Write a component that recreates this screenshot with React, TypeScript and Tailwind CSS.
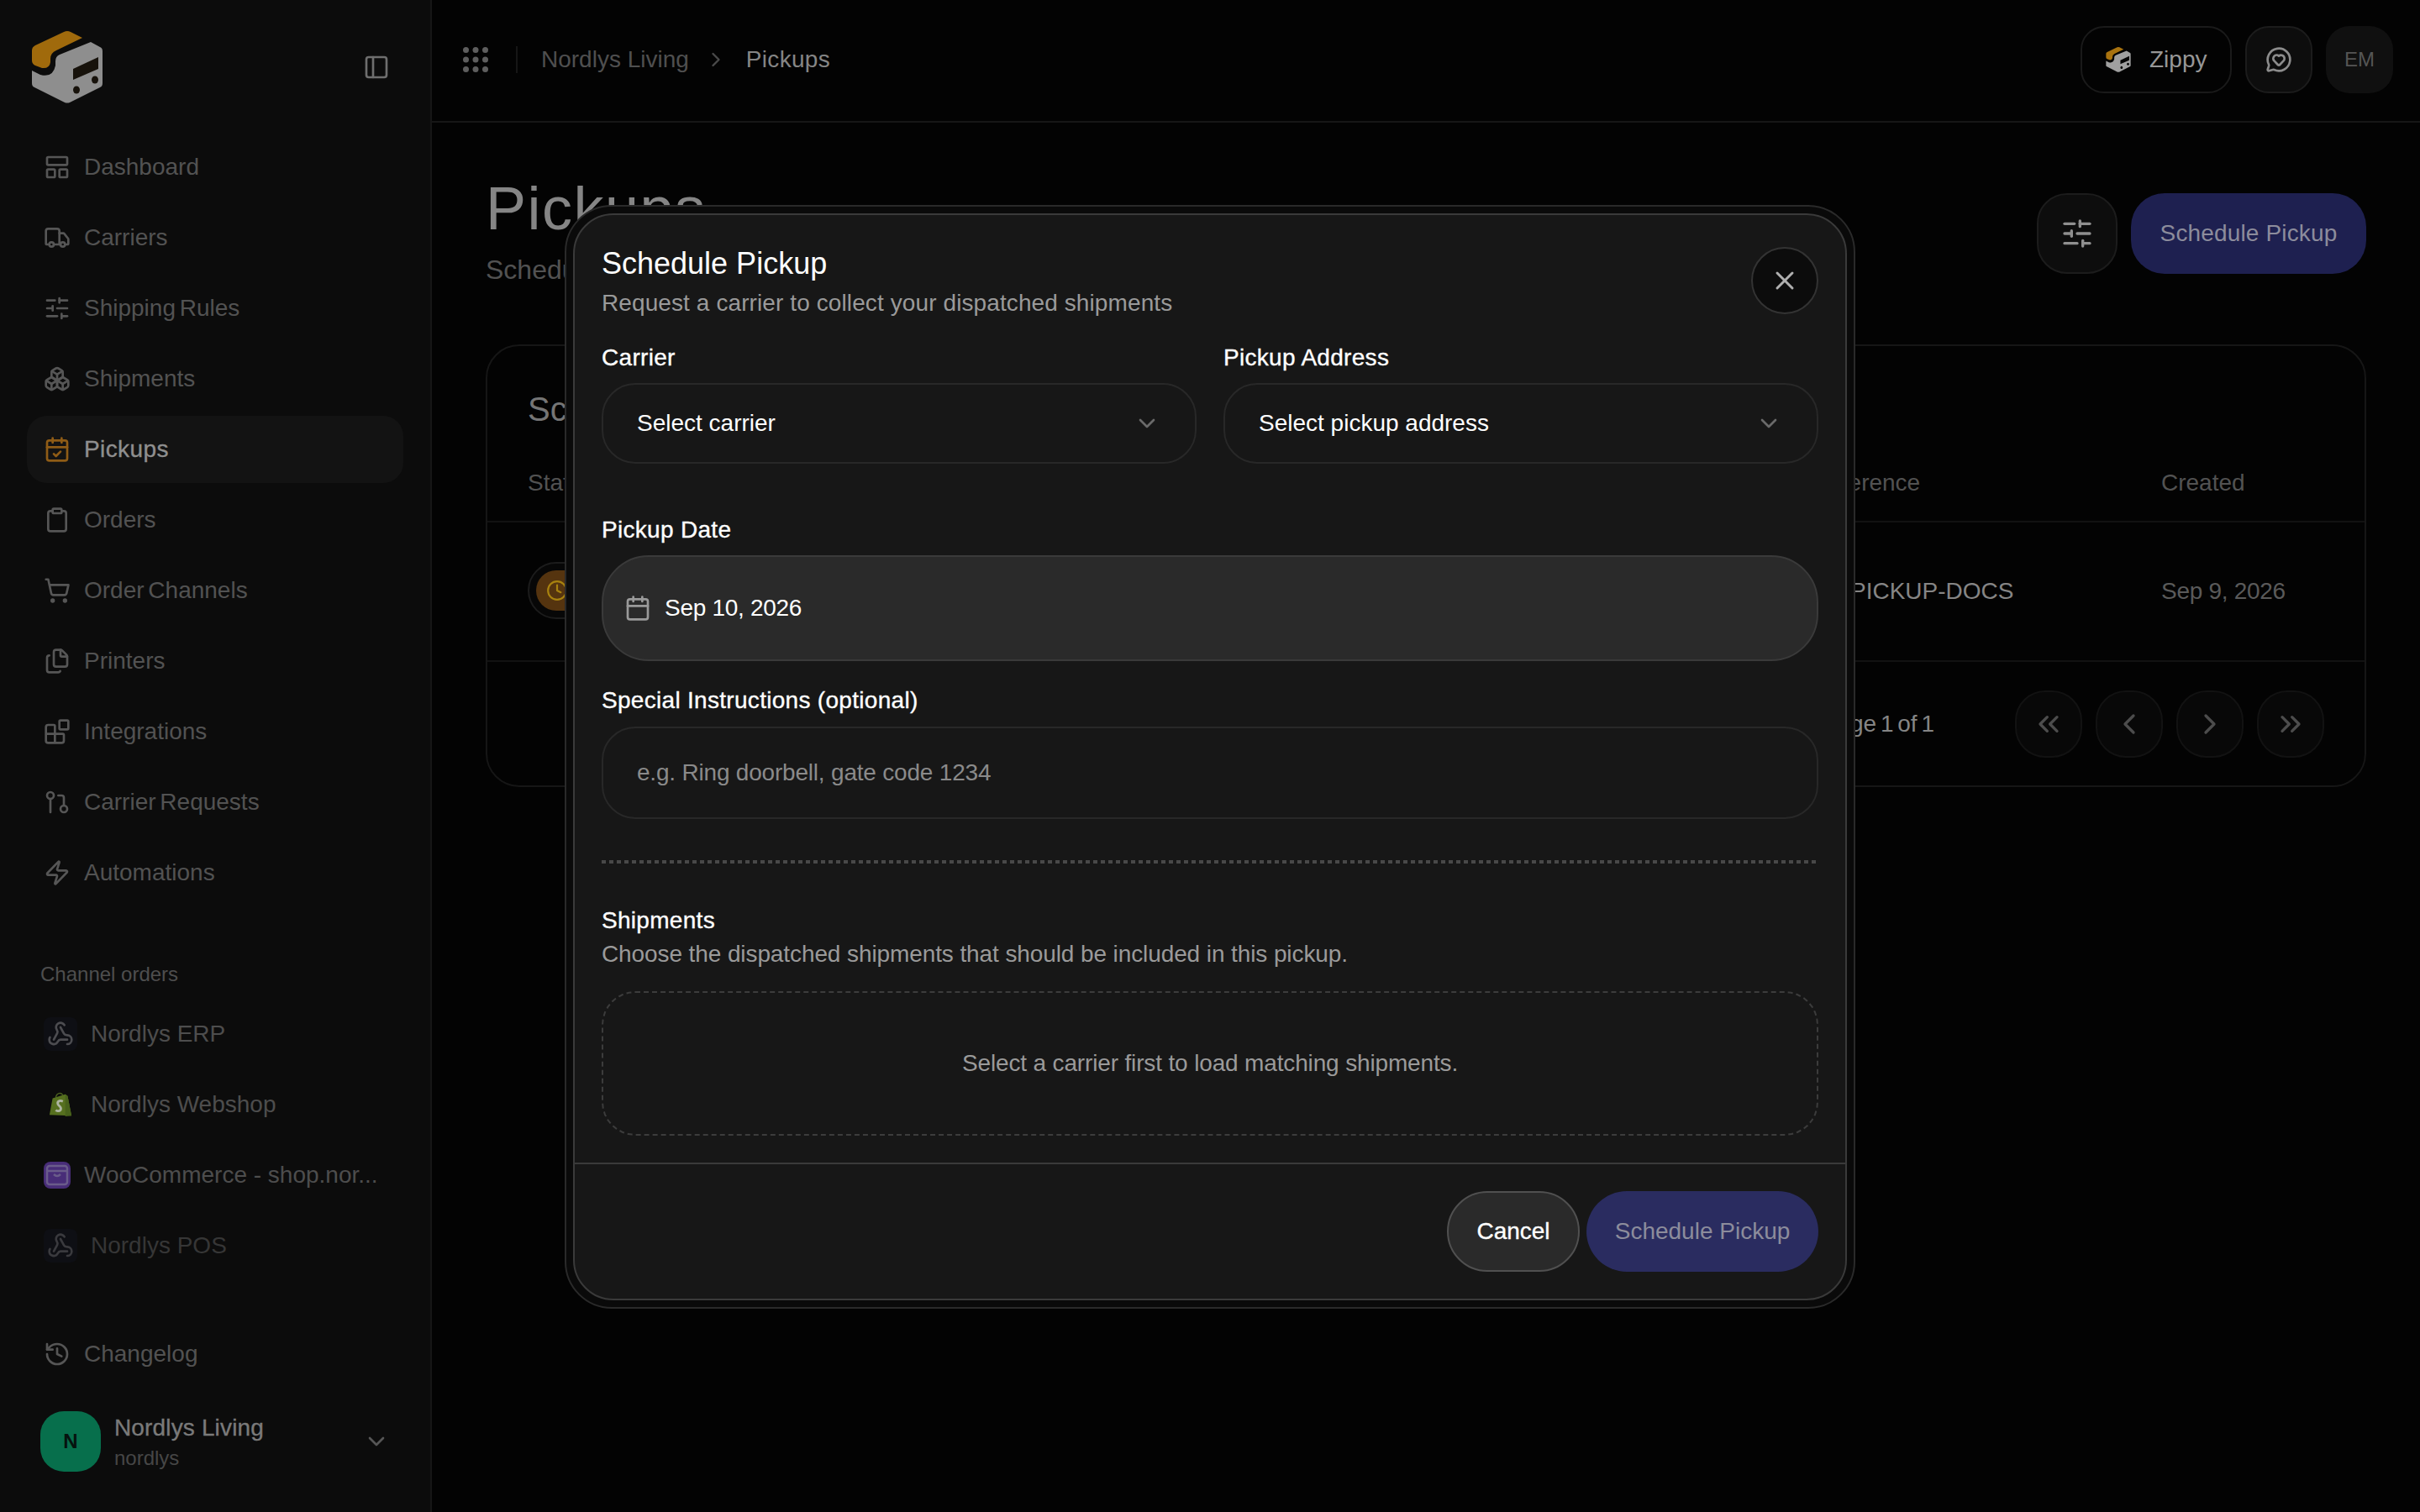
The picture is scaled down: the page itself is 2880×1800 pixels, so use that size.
import React from 'react';
import {
  Blocks,
  Boxes,
  CalendarCheck,
  Calendar,
  ChevronDown,
  ChevronLeft,
  ChevronRight,
  ChevronsLeft,
  ChevronsRight,
  Clipboard,
  Clock,
  Files,
  GitPullRequest,
  History,
  LayoutPanelTop,
  MessageCircleHeart,
  PanelLeft,
  ShoppingCart,
  SlidersHorizontal,
  Truck,
  Webhook,
  X,
  Zap,
} from 'lucide-react';

const navItems = [
  { label: 'Dashboard', icon: LayoutPanelTop },
  { label: 'Carriers', icon: Truck },
  { label: 'Shipping Rules', icon: SlidersHorizontal },
  { label: 'Shipments', icon: Boxes },
  { label: 'Pickups', icon: CalendarCheck, active: true },
  { label: 'Orders', icon: Clipboard },
  { label: 'Order Channels', icon: ShoppingCart },
  { label: 'Printers', icon: Files },
  { label: 'Integrations', icon: Blocks },
  { label: 'Carrier Requests', icon: GitPullRequest },
  { label: 'Automations', icon: Zap },
];

const Logo = ({ className, top, body, cut }: { className: string; top: string; body: string; cut: string }) => (
  <svg viewBox="38 37 84 86" className={className}>
    <path
      className={top}
      d="M38 60Q38 56 42 54L76 38Q80 36 84 38L98 45L67 60Q60 63 60 70L60 74Q59 82 50 81L42 78Q38 76 38 72Z"
    />
    <path
      className={body}
      d="M108 50L119 56Q122 57 122 61L122 99Q122 103 119 104L83 122Q80 123 77 122L41 104Q38 103 38 99L38 84L48 89Q63 93 66 78L66 73Q66 67 71 65Z"
    />
    <path className={cut} d="M87 82L117 68L117 82L87 95Z" />
    <ellipse className={cut} cx="91" cy="107" rx="4" ry="4.5" />
    <ellipse className={cut} cx="113" cy="95" rx="4" ry="4.5" />
  </svg>
);

const NavRow = ({ label, icon: Icon, active }: { label: string; icon: React.ElementType; active?: boolean }) => (
  <div className={`flex h-20 items-center gap-4 rounded-3xl px-5 ${active ? 'bg-[#131313]' : ''}`}>
    <Icon size={32} className={active ? 'text-[#8f5c16]' : 'text-[#565656]'} />
    <span className={active ? 'tracking-[0.4px] text-[#8f8f8f] [-webkit-text-stroke:0.35px]' : 'text-[#525252]'}>
      {label}
    </span>
  </div>
);

const ChannelIconBox = ({ children }: { children: React.ReactNode }) => (
  <div className="flex h-10 w-10 items-center justify-center rounded-lg bg-[#0e0f14]">{children}</div>
);

const Sidebar = () => (
  <aside className="flex h-full w-[514px] shrink-0 flex-col border-r-2 border-[#161616] bg-[#0c0c0c] px-8 pb-12">
    <div className="flex h-[159px] shrink-0 items-center justify-between pl-[6px] pr-[16px]">
      <Logo className="h-[86px] w-[84px]" top="fill-[#a06a0c]" body="fill-[#8e8e8e]" cut="fill-[#17120b]" />
      <PanelLeft size={32} className="text-[#6e6e6e]" />
    </div>

    <nav className="flex flex-col gap-1 text-[28px] [word-spacing:-3px]">
      {navItems.map((item) => (
        <NavRow key={item.label} {...item} />
      ))}
    </nav>

    <div className="mt-[65px] px-4 text-2xl leading-8 text-[#4e4e4e]">Channel orders</div>
    <div className="mt-[15px] flex flex-col gap-1 text-[28px] text-[#4d4d4d]">
      <div className="flex h-20 items-center gap-4 px-5">
        <ChannelIconBox>
          <Webhook size={32} className="text-[#4c4c50]" />
        </ChannelIconBox>
        Nordlys ERP
      </div>
      <div className="flex h-20 items-center gap-4 px-5">
        <div className="flex h-10 w-10 items-center justify-center">
          <svg viewBox="0 0 32 34" className="h-[32px] w-[30px]">
            <path d="M10 8C11 2 17 1 19 5" fill="none" stroke="#4d6322" strokeWidth="1.5" />
            <path d="M6 9L22 4L25 6L30 31L2 30Z" fill="#56701f" />
            <path d="M22 4L25 6L30 31L22 32Z" fill="#48621b" />
            <path d="M19 13C15 11 11 13 13 17C15 20 18 20 16 24C14 26 11 25 10 24" fill="none" stroke="#aeb5a2" strokeWidth="3" />
          </svg>
        </div>
        Nordlys Webshop
      </div>
      <div className="flex h-20 items-center gap-4 px-5">
        <div className="flex h-8 w-8 items-center justify-center rounded-lg bg-[#482d78]">
          <svg viewBox="0 0 32 32" className="h-8 w-8 fill-none stroke-[#6a5c8a] stroke-[2.5]">
            <rect x="4" y="5" width="24" height="22" rx="3" />
            <path d="M4 11H28M12 15Q16 19 20 15" />
          </svg>
        </div>
        WooCommerce - shop.nor...
      </div>
      <div className="flex h-20 items-center gap-4 px-5 text-[#363636]">
        <ChannelIconBox>
          <Webhook size={32} className="text-[#3a3a3e]" />
        </ChannelIconBox>
        Nordlys POS
      </div>
    </div>

    <div className="mt-auto text-[28px]">
      <NavRow label="Changelog" icon={History} />
    </div>
    <div className="mt-[28px] flex items-center pl-4">
      <div className="flex h-[72px] w-[72px] items-center justify-center rounded-[28px] bg-[#076f4c] text-2xl font-bold text-[#06130e]">
        N
      </div>
      <div className="ml-4 flex-1">
        <div className="text-[28px] leading-10 tracking-[0.15px] text-[#7a7a7a] [-webkit-text-stroke:0.35px]">
          Nordlys Living
        </div>
        <div className="text-2xl leading-8 text-[#464646]">nordlys</div>
      </div>
      <ChevronDown size={32} className="mr-4 text-[#565656]" />
    </div>
  </aside>
);

const Header = () => (
  <header className="flex h-[146px] shrink-0 items-center border-b-2 border-[#161616] pb-[2px] pl-[36px] pr-8 text-[28px]">
    <svg viewBox="0 0 32 32" className="h-8 w-8 fill-[#5e5e5e]">
      <circle cx="4.5" cy="4.5" r="3.5" />
      <circle cx="16" cy="4.5" r="3.5" />
      <circle cx="27.5" cy="4.5" r="3.5" />
      <circle cx="4.5" cy="16" r="3.5" />
      <circle cx="16" cy="16" r="3.5" />
      <circle cx="27.5" cy="16" r="3.5" />
      <circle cx="4.5" cy="27.5" r="3.5" />
      <circle cx="16" cy="27.5" r="3.5" />
      <circle cx="27.5" cy="27.5" r="3.5" />
    </svg>
    <div className="ml-[32px] h-8 w-[2px] bg-[#161616]" />
    <span className="ml-[28px] text-[#4f4f4f]">Nordlys Living</span>
    <ChevronRight size={28} className="ml-[18px] text-[#4a4a4a]" />
    <span className="ml-[22px] tracking-[0.3px] text-[#858585]">Pickups</span>
    <div className="ml-auto flex items-center gap-4">
      <div className="flex h-20 w-[180px] items-center gap-[22px] rounded-[28px] border-2 border-[#1a1a1a] pl-[28px] text-[#979797]">
        <Logo className="h-[30px] w-[30px]" top="fill-[#a9730f]" body="fill-[#a0a0a0]" cut="fill-[#050505]" />
        Zippy
      </div>
      <div className="flex h-20 w-20 items-center justify-center rounded-[28px] border-2 border-[#1c1c1c] bg-[#0d0d0d]">
        <MessageCircleHeart size={32} className="text-[#8c8c8c]" />
      </div>
      <div className="flex h-20 w-20 items-center justify-center rounded-[28px] bg-[#101010] text-2xl text-[#555555]">
        EM
      </div>
    </div>
  </header>
);

const PageButton = ({ icon: Icon }: { icon: React.ElementType }) => (
  <div className="flex h-20 w-20 items-center justify-center rounded-[36px] border-2 border-[#121212] bg-[#080808]">
    <Icon size={40} className="text-[#4c4c4c]" />
  </div>
);

const PickupsPage = () => (
  <div className="px-16 pt-[62px] text-[28px]">
    <div className="flex items-start justify-between">
      <div>
        <h1 className="text-[72px] leading-20 tracking-[1.5px] text-[#858585]">Pickups</h1>
        <p className="mt-[13px] text-[32px] leading-10 text-[#525252]">Schedule</p>
      </div>
      <div className="mt-[22px] flex gap-4">
        <div className="flex h-24 w-24 items-center justify-center rounded-[36px] border-2 border-[#1c1c1c] bg-[#0d0d0d]">
          <SlidersHorizontal size={40} className="text-[#8f8f8f]" />
        </div>
        <div className="flex h-24 w-[280px] items-center justify-center rounded-[40px] bg-[#1e2050] tracking-[0.15px] text-[#8c8c9c]">
          Schedule Pickup
        </div>
      </div>
    </div>

    <div className="mt-[69px] overflow-hidden rounded-[40px] border-2 border-[#161616]">
      <div className="px-12 pt-[51px] text-[40px] leading-12 text-[#757575]">Sc</div>
      <div className="flex h-[111px] items-center border-b-2 border-[#121212] pl-12 pt-[18px] text-[#525252]">
        <span className="flex-1">Status</span>
        <span className="w-[416px]">Reference</span>
        <span className="w-[242px]">Created</span>
      </div>
      <div className="flex h-[166px] items-center border-b-2 border-[#121212] pl-12">
        <div className="flex-1 pb-[2px]">
          <div className="flex h-[68px] w-[160px] items-center rounded-full border-2 border-[#1c1c1c] bg-[#070707] pl-2">
            <div className="flex h-12 w-[140px] items-center rounded-full bg-[#55340f] pl-3">
              <Clock size={26} className="text-[#a8820f]" />
            </div>
          </div>
        </div>
        <span className="w-[416px] pl-[46px] text-[#858585]">PICKUP-DOCS</span>
        <span className="w-[242px] tracking-[-0.3px] text-[#5a5a5a]">Sep 9, 2026</span>
      </div>
      <div className="flex h-[147px] items-center justify-end pr-12 text-[#858585]">
        <span className="mr-[96px] [word-spacing:-3px]">Page 1 of 1</span>
        <div className="flex gap-4">
          <PageButton icon={ChevronsLeft} />
          <PageButton icon={ChevronLeft} />
          <PageButton icon={ChevronRight} />
          <PageButton icon={ChevronsRight} />
        </div>
      </div>
    </div>
  </div>
);

const FieldLabel = ({ children }: { children: React.ReactNode }) => (
  <div className="pt-[2px] leading-10 tracking-[0.3px] text-white [-webkit-text-stroke:0.35px]">{children}</div>
);

const SelectField = ({ label, value }: { label: string; value: string }) => (
  <div>
    <FieldLabel>{label}</FieldLabel>
    <div className="mt-[10px] flex h-24 items-center justify-between rounded-[40px] border-2 border-[#282828] pl-[40px] pr-[41px] text-white">
      {value}
      <ChevronDown size={32} className="text-[#6a6a6a]" />
    </div>
  </div>
);

const ScheduleDialog = () => (
  <div className="fixed inset-0 flex items-center justify-center text-[28px]">
    <div className="mt-[2px] w-[1536px] rounded-[56px] border-2 border-[#2a2a2a] bg-[#0a0a0a] p-2">
      <div className="rounded-[48px] border-2 border-[#3a3a3a] bg-[#171717]">
        <div className="px-8 pt-[30px]">
          <div className="flex items-start justify-between">
            <div>
              <h2 className="text-4xl leading-14 text-white">Schedule Pickup</h2>
              <p className="-mt-px leading-10 tracking-[0.1px] text-[#9a9a9a]">
                Request a carrier to collect your dispatched shipments
              </p>
            </div>
            <div className="mt-[8px] flex h-20 w-20 items-center justify-center rounded-full border-2 border-[#333333] bg-[#0c0c0c]">
              <X size={36} className="text-[#b0b0b0]" />
            </div>
          </div>

          <div className="mt-[23px] grid grid-cols-2 gap-8">
            <SelectField label="Carrier" value="Select carrier" />
            <SelectField label="Pickup Address" value="Select pickup address" />
          </div>

          <div className="mt-[57px]">
            <FieldLabel>Pickup Date</FieldLabel>
          </div>
          <div className="mt-[10px] flex h-[126px] items-center gap-4 rounded-[56px] border-2 border-[#3a3a3a] bg-[#2a2a2a] pl-[25px] tracking-[-0.3px] text-white">
            <Calendar size={32} className="text-[#9a9a9a]" />
            Sep 10, 2026
          </div>

          <div className="mt-[25px]">
            <FieldLabel>Special Instructions (optional)</FieldLabel>
          </div>
          <div className="mt-[11px] flex h-[110px] items-center rounded-[40px] border-2 border-[#282828] pl-[40px] tracking-[-0.2px] text-[#8a8a8a]">
            e.g. Ring doorbell, gate code 1234
          </div>

          <div className="mt-[49px] h-1 bg-[repeating-linear-gradient(90deg,#484848_0_5px,transparent_5px_9px)]" />

          <div className="mt-[46px]">
            <FieldLabel>Shipments</FieldLabel>
          </div>
          <p className="leading-10 tracking-[-0.1px] text-[#9a9a9a]">
            Choose the dispatched shipments that should be included in this pickup.
          </p>
          <div className="mt-[24px] flex h-[172px] items-center justify-center rounded-[40px] border-2 border-dashed border-[#3c3c3c] tracking-[-0.15px] text-[#9a9a9a]">
            Select a carrier first to load matching shipments.
          </div>
        </div>

        <div className="mt-8 flex justify-end gap-2 border-t-2 border-[#3a3a3a] px-8 py-8">
          <div className="flex h-24 w-[158px] items-center justify-center rounded-full border-2 border-[#505050] bg-[#2a2a2a] text-white [-webkit-text-stroke:0.35px]">
            Cancel
          </div>
          <div className="flex h-24 w-[276px] items-center justify-center rounded-full bg-[#2a2c60] text-[#8c8c9c]">
            Schedule Pickup
          </div>
        </div>
      </div>
    </div>
  </div>
);

export default function App() {
  return (
    <div className="relative flex h-screen w-full overflow-hidden bg-[#030303] font-['Liberation_Sans',sans-serif]">
      <Sidebar />
      <main className="flex min-w-0 flex-1 flex-col">
        <Header />
        <PickupsPage />
      </main>
      <ScheduleDialog />
    </div>
  );
}
